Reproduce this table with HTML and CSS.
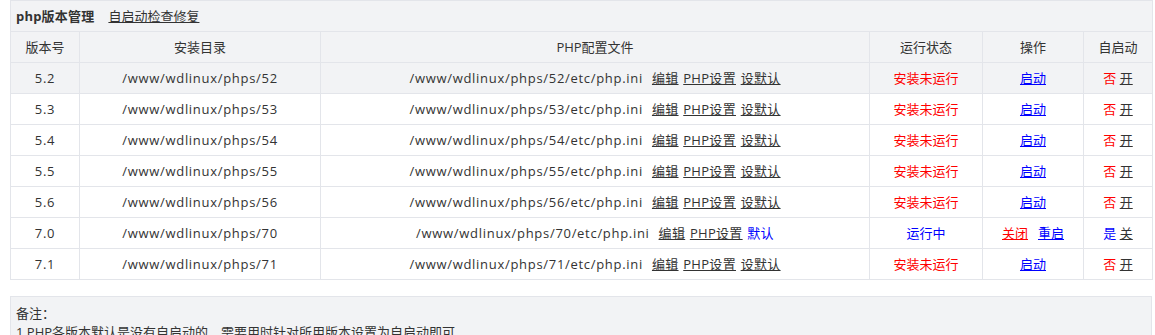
FILE: index.html
```html
<!DOCTYPE html>
<html lang="zh">
<head>
<meta charset="utf-8">
<link rel="stylesheet" href="styles.css">
</head>
<body>
<table class="grid">
  <colgroup>
    <col class="c1"><col class="c2"><col class="c3"><col class="c4"><col class="c5"><col class="c6">
  </colgroup>
  <tr class="title-row">
    <td colspan="6"><b class="title">php版本管理</b><a class="lk dark" href="#">自启动检查修复</a></td>
  </tr>
  <tr class="head">
    <td>版本号</td><td>安装目录</td><td>PHP配置文件</td><td>运行状态</td><td>操作</td><td>自启动</td>
  </tr>
  <tr class="hl">
    <td class="path">5.2</td><td class="path">/www/wdlinux/phps/52</td>
    <td><span class="path">/www/wdlinux/phps/52/etc/php.ini</span><span class="links"><a class="lk dark" href="#">编辑</a> <a class="lk dark" href="#">PHP设置</a> <a class="lk dark" href="#">设默认</a></span></td>
    <td class="red">安装未运行</td><td><a class="lk blue" href="#">启动</a></td>
    <td><span class="red">否</span> <a class="lk dark" href="#">开</a></td>
  </tr>
  <tr>
    <td class="path">5.3</td><td class="path">/www/wdlinux/phps/53</td>
    <td><span class="path">/www/wdlinux/phps/53/etc/php.ini</span><span class="links"><a class="lk dark" href="#">编辑</a> <a class="lk dark" href="#">PHP设置</a> <a class="lk dark" href="#">设默认</a></span></td>
    <td class="red">安装未运行</td><td><a class="lk blue" href="#">启动</a></td>
    <td><span class="red">否</span> <a class="lk dark" href="#">开</a></td>
  </tr>
  <tr>
    <td class="path">5.4</td><td class="path">/www/wdlinux/phps/54</td>
    <td><span class="path">/www/wdlinux/phps/54/etc/php.ini</span><span class="links"><a class="lk dark" href="#">编辑</a> <a class="lk dark" href="#">PHP设置</a> <a class="lk dark" href="#">设默认</a></span></td>
    <td class="red">安装未运行</td><td><a class="lk blue" href="#">启动</a></td>
    <td><span class="red">否</span> <a class="lk dark" href="#">开</a></td>
  </tr>
  <tr>
    <td class="path">5.5</td><td class="path">/www/wdlinux/phps/55</td>
    <td><span class="path">/www/wdlinux/phps/55/etc/php.ini</span><span class="links"><a class="lk dark" href="#">编辑</a> <a class="lk dark" href="#">PHP设置</a> <a class="lk dark" href="#">设默认</a></span></td>
    <td class="red">安装未运行</td><td><a class="lk blue" href="#">启动</a></td>
    <td><span class="red">否</span> <a class="lk dark" href="#">开</a></td>
  </tr>
  <tr>
    <td class="path">5.6</td><td class="path">/www/wdlinux/phps/56</td>
    <td><span class="path">/www/wdlinux/phps/56/etc/php.ini</span><span class="links"><a class="lk dark" href="#">编辑</a> <a class="lk dark" href="#">PHP设置</a> <a class="lk dark" href="#">设默认</a></span></td>
    <td class="red">安装未运行</td><td><a class="lk blue" href="#">启动</a></td>
    <td><span class="red">否</span> <a class="lk dark" href="#">开</a></td>
  </tr>
  <tr>
    <td class="path">7.0</td><td class="path">/www/wdlinux/phps/70</td>
    <td><span class="path">/www/wdlinux/phps/70/etc/php.ini</span><span class="links"><a class="lk dark" href="#">编辑</a> <a class="lk dark" href="#">PHP设置</a> <span class="blue">默认</span></span></td>
    <td class="blue">运行中</td><td><a class="lk red" href="#">关闭</a><a class="lk blue gap" href="#">重启</a></td>
    <td><span class="blue">是</span> <a class="lk dark" href="#">关</a></td>
  </tr>
  <tr>
    <td class="path">7.1</td><td class="path">/www/wdlinux/phps/71</td>
    <td><span class="path">/www/wdlinux/phps/71/etc/php.ini</span><span class="links"><a class="lk dark" href="#">编辑</a> <a class="lk dark" href="#">PHP设置</a> <a class="lk dark" href="#">设默认</a></span></td>
    <td class="red">安装未运行</td><td><a class="lk blue" href="#">启动</a></td>
    <td><span class="red">否</span> <a class="lk dark" href="#">开</a></td>
  </tr>
</table>
<div class="notes">
  <p>备注：</p>
  <p>1.PHP各版本默认是没有自启动的，需要用时针对所用版本设置为自启动即可</p>
</div>
</body>
</html>
```
FILE: styles.css
```css
html, body {
  margin: 0;
  padding: 0;
  background: #fff;
}
body {
  padding: 0 3px 0 10px;
  font-family: "Open Sans", "Noto Sans CJK SC", sans-serif;
  font-size: 13px;
  color: #333;
}
.grid {
  width: 1142px;
  border-collapse: collapse;
  table-layout: fixed;
}
.c1 { width: 69px; }
.c2 { width: 241px; }
.c3 { width: 549px; }
.c4 { width: 113px; }
.c5 { width: 101px; }
.c6 { width: 69px; }
.grid td {
  border: 1px solid #e3e5ea;
  height: 30px;
  padding: 0;
  text-align: center;
  white-space: nowrap;
  line-height: 30px;
}
.title-row td {
  background: #f2f3f5;
  text-align: left;
  padding-left: 5px;
}
.title {
  font-weight: 700;
  margin-right: 14px;
  letter-spacing: 0.2px;
}
.head td, .hl td {
  background: #f2f3f5;
}
.path {
  letter-spacing: 0.7px;
}
.lk {
  text-decoration: underline;
}
.dark { color: #333; }
.blue { color: #00f; }
.red { color: #f00; }
.links {
  margin-left: 9px;
  letter-spacing: 0.3px;
  word-spacing: 1px;
}
.gap { margin-left: 10px; }
.notes {
  margin-top: 16px;
  width: 1140px;
  border: 1px solid #e3e5ea;
  background: #f2f3f5;
  padding: 7px 0 0 0;
}
.notes p {
  margin: 0;
  padding-left: 5px;
  line-height: 19px;
}
```
